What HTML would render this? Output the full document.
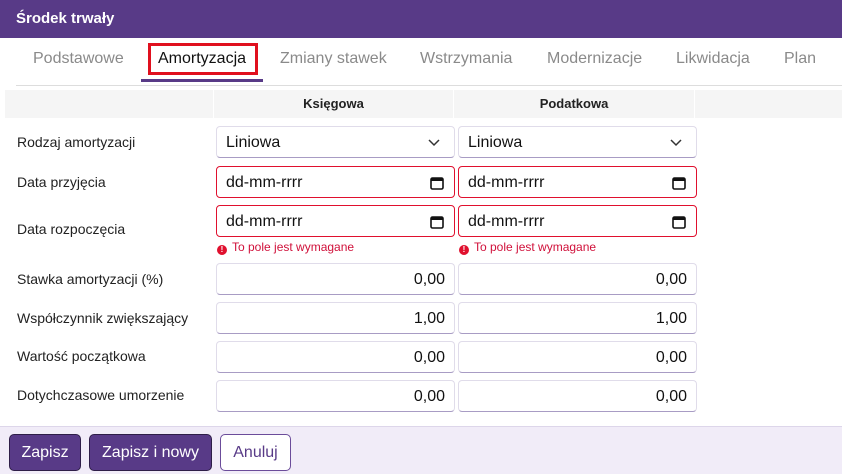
<!DOCTYPE html><html><head><meta charset="utf-8"><style>
*{box-sizing:border-box;margin:0;padding:0}
body{width:842px;height:474px;overflow:hidden;background:#fff;font-family:"Liberation Sans",Arial,sans-serif;position:relative}
.a{position:absolute}
.hdr{left:0;top:0;width:842px;height:38px;background:#583a87;color:#fff;font-weight:bold;font-size:15px;padding:10px 0 0 16px}
.tab{top:50px;font-size:16px;color:#8a8a8a}
.lbl{left:17px;font-size:14px;color:#222}
.in{width:239px;height:32px;border:1px solid #e0dcea;border-bottom:1px solid #a89cc4;border-radius:4px;font-size:16px;color:#111;padding:7px 9px;background:#fff}
.r{text-align:right}
.err{border:1px solid #e0102e}
.msg{font-size:12px;color:#d0103a;top:240px}
.msg i{display:inline-block;width:10px;height:10px;border-radius:50%;background:#e0102e;color:#fff;font-style:normal;font-size:8px;font-weight:bold;text-align:center;line-height:10px;margin-right:5px;vertical-align:-1px}
.btn{top:434px;height:37px;border-radius:5px;font-size:16px;padding-top:9px;text-align:center}
.p{background:#583a87;color:#fff;border:1px solid #2e1e48}
</style></head><body>
<div class="a hdr">Środek trwały</div>
<div class="a tab" style="left:33px">Podstawowe</div>
<div class="a" style="left:148px;top:43px;width:110px;height:32px;border:3px solid #e0101e"></div>
<div class="a tab" style="left:158px;color:#111">Amortyzacja</div>
<div class="a" style="left:141px;top:79px;width:122px;height:3px;background:#583a87"></div>
<div class="a tab" style="left:280px">Zmiany stawek</div>
<div class="a tab" style="left:420px">Wstrzymania</div>
<div class="a tab" style="left:547px">Modernizacje</div>
<div class="a tab" style="left:676px">Likwidacja</div>
<div class="a tab" style="left:784px">Plan</div>
<div class="a" style="left:16px;top:85px;width:826px;height:1px;background:#ddd"></div>
<div class="a" style="left:5px;top:90px;width:837px;height:28px;background:#f5f5f5"></div>
<div class="a" style="left:213px;top:90px;width:1px;height:28px;background:#fff"></div>
<div class="a" style="left:453px;top:90px;width:1px;height:28px;background:#fff"></div>
<div class="a" style="left:694px;top:90px;width:1px;height:28px;background:#fff"></div>
<div class="a" style="left:214px;top:96px;width:239px;text-align:center;font-weight:bold;font-size:13px;color:#222">Księgowa</div>
<div class="a" style="left:454px;top:96px;width:240px;text-align:center;font-weight:bold;font-size:13px;color:#222">Podatkowa</div>

<div class="a lbl" style="top:134px">Rodzaj amortyzacji</div>
<div class="a lbl" style="top:174px">Data przyjęcia</div>
<div class="a lbl" style="top:221px">Data rozpoczęcia</div>
<div class="a lbl" style="top:271px">Stawka amortyzacji (%)</div>
<div class="a lbl" style="top:310px">Współczynnik zwiększający</div>
<div class="a lbl" style="top:348px">Wartość początkowa</div>
<div class="a lbl" style="top:387px">Dotychczasowe umorzenie</div>

<div class="a in" style="left:216px;top:126px">Liniowa<svg class="a" style="right:14px;top:12px" width="12" height="8"><path d="M1 1l5 5 5-5" fill="none" stroke="#333" stroke-width="1.5"/></svg></div>
<div class="a in" style="left:458px;top:126px">Liniowa<svg class="a" style="right:14px;top:12px" width="12" height="8"><path d="M1 1l5 5 5-5" fill="none" stroke="#333" stroke-width="1.5"/></svg></div>
<div class="a in err" style="left:216px;top:166px">dd-mm-rrrr<svg class="a" style="right:10px;top:9px" width="14" height="14"><rect x="1" y="2" width="12" height="11" rx="1.5" fill="none" stroke="#111" stroke-width="1.6"/><rect x="1" y="2" width="12" height="3" fill="#111"/></svg></div>
<div class="a in err" style="left:458px;top:166px">dd-mm-rrrr<svg class="a" style="right:10px;top:9px" width="14" height="14"><rect x="1" y="2" width="12" height="11" rx="1.5" fill="none" stroke="#111" stroke-width="1.6"/><rect x="1" y="2" width="12" height="3" fill="#111"/></svg></div>
<div class="a in err" style="left:216px;top:205px">dd-mm-rrrr<svg class="a" style="right:10px;top:9px" width="14" height="14"><rect x="1" y="2" width="12" height="11" rx="1.5" fill="none" stroke="#111" stroke-width="1.6"/><rect x="1" y="2" width="12" height="3" fill="#111"/></svg></div>
<div class="a in err" style="left:458px;top:205px">dd-mm-rrrr<svg class="a" style="right:10px;top:9px" width="14" height="14"><rect x="1" y="2" width="12" height="11" rx="1.5" fill="none" stroke="#111" stroke-width="1.6"/><rect x="1" y="2" width="12" height="3" fill="#111"/></svg></div>
<div class="a msg" style="left:217px"><i>!</i>To pole jest wymagane</div>
<div class="a msg" style="left:459px"><i>!</i>To pole jest wymagane</div>

<div class="a in r" style="left:216px;top:263px">0,00</div>
<div class="a in r" style="left:458px;top:263px">0,00</div>
<div class="a in r" style="left:216px;top:302px">1,00</div>
<div class="a in r" style="left:458px;top:302px">1,00</div>
<div class="a in r" style="left:216px;top:341px">0,00</div>
<div class="a in r" style="left:458px;top:341px">0,00</div>
<div class="a in r" style="left:216px;top:380px">0,00</div>
<div class="a in r" style="left:458px;top:380px">0,00</div>

<div class="a" style="left:0;top:426px;width:842px;height:48px;background:#f1ecf8;border-top:1px solid #ddd6ea"></div>
<div class="a btn p" style="left:9px;width:72px">Zapisz</div>
<div class="a btn p" style="left:89px;width:123px">Zapisz i nowy</div>
<div class="a btn" style="left:220px;width:71px;background:#fff;border:1px solid #6b4c9a;color:#583a87">Anuluj</div>
</body></html>
